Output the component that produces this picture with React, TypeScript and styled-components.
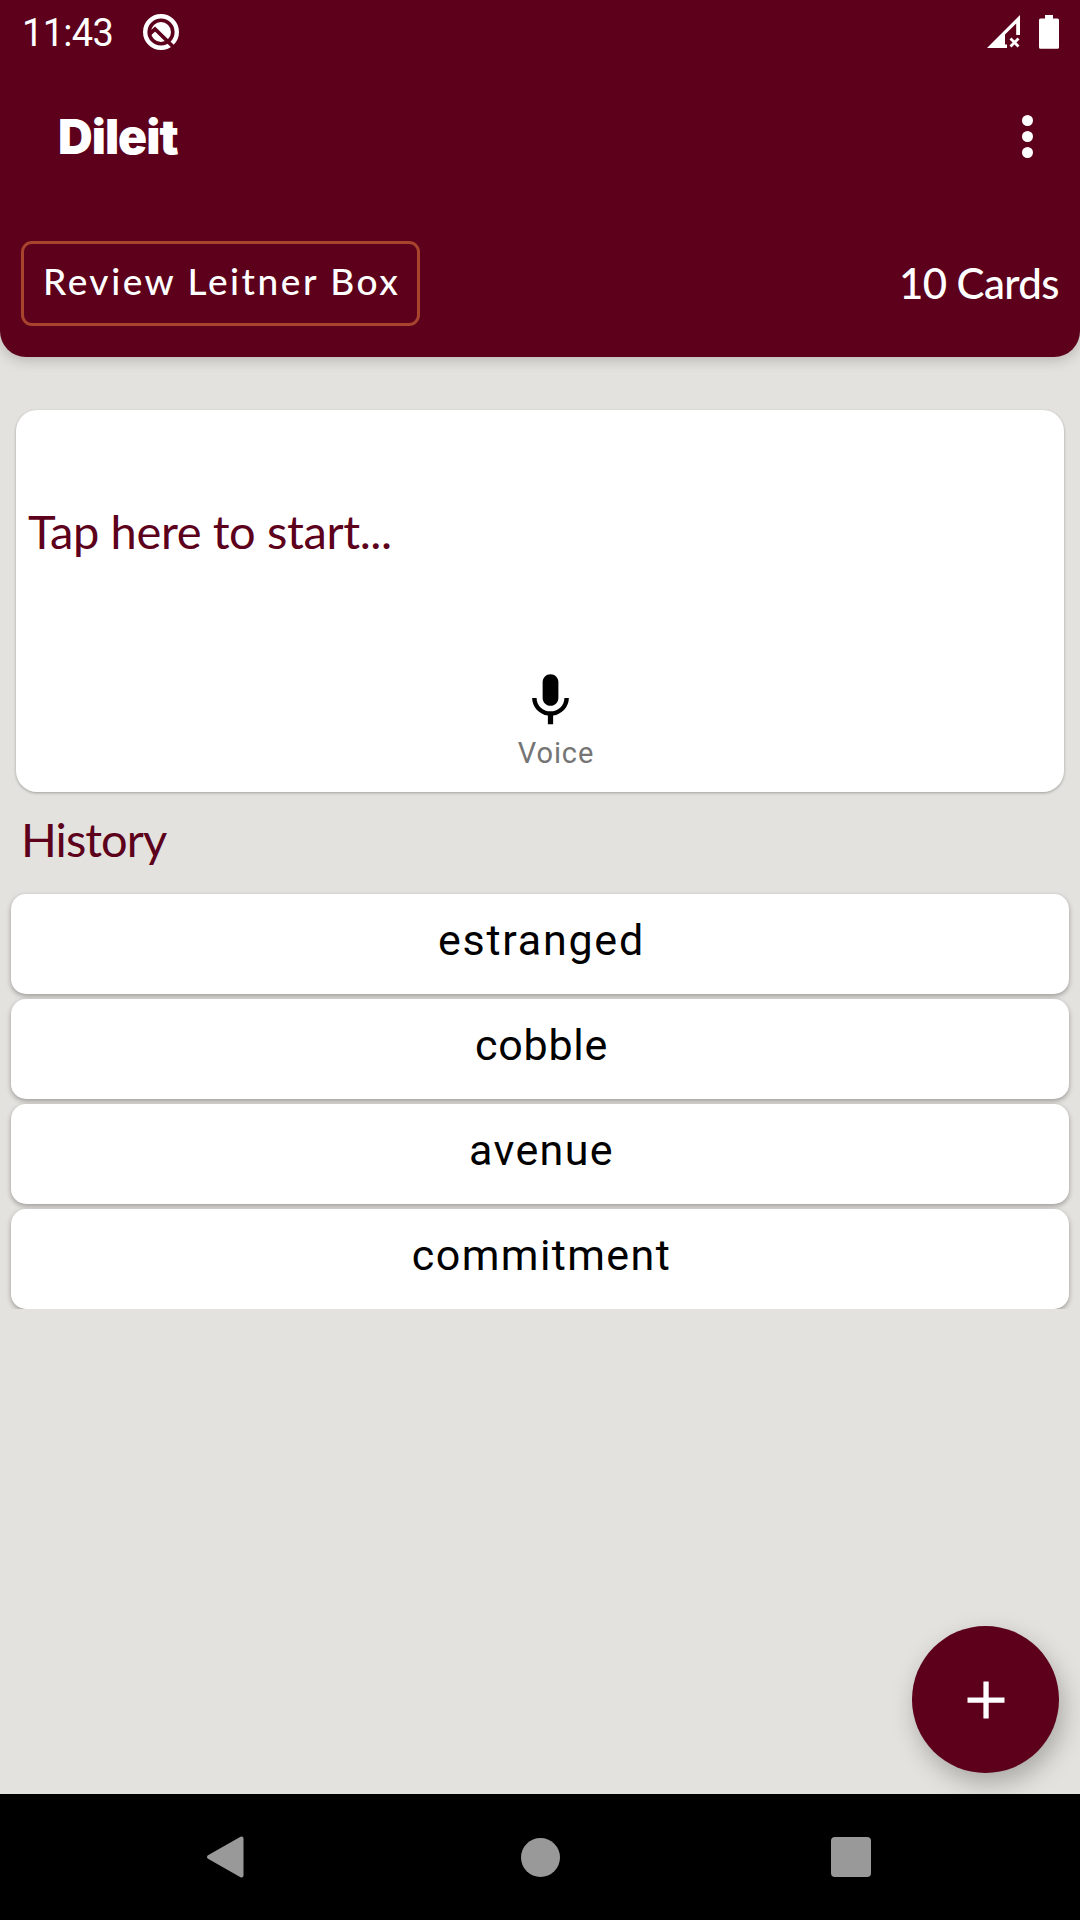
import React from "react";
import styled, { createGlobalStyle } from "styled-components";

const wine = "#5c001b";
const paper = "#e3e2de";

const GlobalStyle = createGlobalStyle`
  * { box-sizing: border-box; }
  body { margin: 0; background: ${paper}; }
`;

const Screen = styled.div`
  width: 1080px;
  height: 1920px;
  display: flex;
  flex-direction: column;
  background: ${paper};
  font-family: Roboto, sans-serif;
  overflow: hidden;
`;

const Header = styled.header`
  flex: none;
  height: 357px;
  display: flex;
  flex-direction: column;
  background: ${wine};
  color: #fff;
  border-radius: 0 0 26px 26px;
  box-shadow: 0 3px 14px rgba(0, 0, 0, 0.2);
`;

const StatusBar = styled.div`
  height: 63px;
  display: flex;
  align-items: center;
  padding: 0 21px 0 22px;
`;

const Clock = styled.span`
  font-size: 38px;
  line-height: 63px;
  letter-spacing: -0.7px;
  width: 120px;
  padding-top: 3px;
`;

const StatusIcons = styled.div`
  margin-left: auto;
  display: flex;
  gap: 19px;
`;

const Toolbar = styled.div`
  height: 147px;
  display: flex;
  align-items: center;
  justify-content: space-between;
  padding: 0 47px 0 58px;
`;

const Title = styled.h1`
  margin: 0;
  font: 900 48px/58px Inter, sans-serif;
  letter-spacing: -1px;
`;

const MenuButton = styled.button`
  display: flex;
  flex-direction: column;
  align-items: center;
  gap: 5px;
  padding: 0;
  border: 0;
  background: none;
`;

const Dot = styled.i`
  width: 11px;
  height: 11px;
  border-radius: 50%;
  background: #fff;
`;

const ReviewRow = styled.div`
  display: flex;
  align-items: center;
  justify-content: space-between;
  padding: 31px 21px 0 21px;
`;

const ReviewButton = styled.button`
  width: 399px;
  height: 85px;
  padding: 0 0 6px 19px;
  border: 3px solid #a8432d;
  border-radius: 11px;
  background: none;
  color: #fff;
  text-align: left;
  white-space: nowrap;
  font: 500 37px/46px Lato, sans-serif;
  letter-spacing: 2.55px;
`;

const CardCount = styled.span`
  padding-bottom: 2px;
  font: 500 42px/50px Lato, sans-serif;
  letter-spacing: -0.6px;
`;

const SearchCard = styled.section`
  flex: none;
  height: 382px;
  margin: 53px 16px 0;
  padding-top: 91px;
  display: flex;
  flex-direction: column;
  background: #fff;
  border-radius: 21px;
  box-shadow: 0 1px 3px rgba(0, 0, 0, 0.3);
`;

const Prompt = styled.div`
  padding-left: 12px;
  color: ${wine};
  font: 400 47px/60px Lato, sans-serif;
  letter-spacing: -0.38px;
`;

const Voice = styled.button`
  width: 90px;
  margin: 108px 0 0 495px;
  padding: 0;
  border: 0;
  background: none;
  display: flex;
  flex-direction: column;
  align-items: center;
  gap: 4px;
  color: #757575;
  font: 400 29px/34px Roboto, sans-serif;
  letter-spacing: 0.9px;

  svg {
    margin-right: 12px;
  }
`;

const HistoryTitle = styled.h2`
  flex: none;
  height: 102px;
  margin: 0;
  padding: 17px 0 0 21px;
  color: ${wine};
  font: 400 47px/60px Lato, sans-serif;
  letter-spacing: -0.95px;
`;

const HistoryList = styled.ul`
  flex: none;
  height: 415px;
  margin: 0;
  padding: 0 11px;
  display: flex;
  flex-direction: column;
  gap: 5px;
  list-style: none;
  clip-path: inset(-8px 0 0 0);
`;

const Word = styled.li<{ $spacing: number }>`
  flex: none;
  height: 100px;
  padding: 0 0 8px 3px;
  display: flex;
  align-items: center;
  justify-content: center;
  background: #fff;
  border-radius: 15px;
  color: #000;
  font-size: 43px;
  letter-spacing: ${(p) => p.$spacing}px;
  box-shadow: 0 2px 5px rgba(0, 0, 0, 0.32);
`;

const Footer = styled.div`
  flex: 1;
  display: flex;
  flex-direction: column;
  align-items: flex-end;
  justify-content: flex-end;
  padding: 0 21px 21px;
`;

const AddButton = styled.button`
  width: 147px;
  height: 147px;
  padding: 0;
  border: 0;
  border-radius: 50%;
  background: ${wine};
  display: flex;
  align-items: center;
  justify-content: center;
  box-shadow: 4px 10px 24px rgba(0, 0, 0, 0.26);
`;

const NavBar = styled.nav`
  flex: none;
  position: relative;
  height: 126px;
  display: flex;
  align-items: center;
  justify-content: space-between;
  padding: 0 209px 0 206px;
  background: #000;
`;

const HomeButton = styled.i`
  width: 39px;
  height: 39px;
  margin-left: 5px;
  border-radius: 50%;
  background: #999;
`;

const RecentsButton = styled.i`
  width: 40px;
  height: 40px;
  border-radius: 4px;
  background: #999;
`;

const words = [
  { text: "estranged", spacing: 1.75 },
  { text: "cobble", spacing: 0.7 },
  { text: "avenue", spacing: 1.35 },
  { text: "commitment", spacing: 1.4 },
];

export default function App() {
  return (
    <Screen>
      <GlobalStyle />
      <Header>
        <StatusBar>
          <Clock>11:43</Clock>
          <svg width="38" height="38" viewBox="0 0 38 38">
            <circle cx="19" cy="19" r="15.8" fill="none" stroke="#fff" strokeWidth="4.4" />
            <circle cx="19" cy="19" r="10" fill="#fff" />
            <path d="M7 21.5 L13 16 L33 35.5" fill="none" stroke={wine} strokeWidth="3.8" />
          </svg>
          <StatusIcons>
            <svg width="33" height="34" viewBox="0 0 33 34" fill="#fff">
              <path fillRule="evenodd" d="M0 33 L33 0 V20 H29.2 V8.5 L18 19.5 V29.5 H20 V33Z" />
              <path d="M23.5 23.5 L31.5 31.5 M31.5 23.5 L23.5 31.5" stroke="#fff" strokeWidth="2.8" />
            </svg>
            <svg width="20" height="34" viewBox="0 0 20 34" fill="#fff">
              <path d="M6 0H14V3.5H18.5Q20 3.5 20 5V32.3Q20 33.8 18.5 33.8H1.5Q0 33.8 0 32.3V5Q0 3.5 1.5 3.5H6Z" />
            </svg>
          </StatusIcons>
        </StatusBar>
        <Toolbar>
          <Title>Dileit</Title>
          <MenuButton aria-label="More options">
            <Dot />
            <Dot />
            <Dot />
          </MenuButton>
        </Toolbar>
        <ReviewRow>
          <ReviewButton>Review Leitner Box</ReviewButton>
          <CardCount>10 Cards</CardCount>
        </ReviewRow>
      </Header>

      <SearchCard>
        <Prompt>Tap here to start...</Prompt>
        <Voice>
          <svg width="63" height="63" viewBox="0 0 24 24" fill="#000">
            <path d="M12 14c1.66 0 3-1.34 3-3V5c0-1.66-1.34-3-3-3S9 3.34 9 5v6c0 1.66 1.34 3 3 3z" />
            <path d="M17.3 11c0 3-2.54 5.1-5.3 5.1S6.7 14 6.7 11H5c0 3.41 2.72 6.23 6 6.72V21h2v-3.28c3.28-.48 6-3.3 6-6.72h-1.7z" />
          </svg>
          Voice
        </Voice>
      </SearchCard>

      <HistoryTitle>History</HistoryTitle>
      <HistoryList>
        {words.map((w) => (
          <Word key={w.text} $spacing={w.spacing}>
            {w.text}
          </Word>
        ))}
      </HistoryList>

      <Footer>
        <AddButton aria-label="Add card">
          <svg width="38" height="38" viewBox="0 0 38 38" fill="#fff">
            <path d="M16.4 0.5h5.3v15.9h15.8v5.3H21.7v15.8h-5.3V21.7H0.5v-5.3h15.9z" />
          </svg>
        </AddButton>
      </Footer>

      <NavBar>
        <svg width="38" height="44" viewBox="0 0 38 44">
          <path d="M3 22 L35.5 3.5 V40.5Z" fill="#999" stroke="#999" strokeWidth="4" strokeLinejoin="round" />
        </svg>
        <HomeButton />
        <RecentsButton />
      </NavBar>
    </Screen>
  );
}
